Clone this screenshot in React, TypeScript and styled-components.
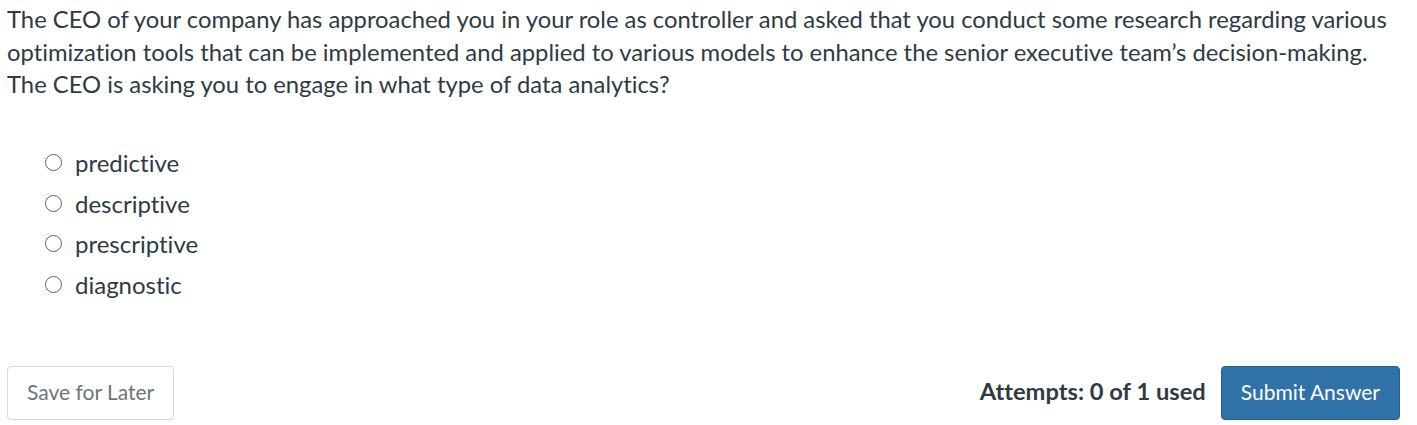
import styled, { createGlobalStyle } from 'styled-components';

const GlobalStyle = createGlobalStyle`
  html, body {
    margin: 0;
    padding: 0;
    background: #fff;
  }
  body {
    font-family: Lato, "Open Sans", sans-serif;
    color: #2d3b45;
    font-variant-ligatures: none;
  }
`;

const Page = styled.div`
  display: flex;
  flex-direction: column;
  height: 425px;
  padding: 3px 7px 0 7px;
  box-sizing: border-box;
`;

const Question = styled.p`
  margin: 0;
  font-size: 23.8px;
  line-height: 32.5px;
  width: 1395px;
`;

const OptionList = styled.div`
  display: flex;
  flex-direction: column;
  margin-top: 42px;
  padding-left: 38px;
`;

const Option = styled.label`
  display: flex;
  align-items: center;
  gap: 13px;
  height: 40.5px;
  font-size: 24px;
`;

const Radio = styled.span`
  width: 15px;
  height: 15px;
  border: 1.5px solid #5f5f5f;
  border-radius: 50%;
  flex-shrink: 0;
`;

const Footer = styled.div`
  display: flex;
  align-items: center;
  margin-top: auto;
  margin-bottom: 5px;
  width: 1393px;
`;

const Button = styled.button<{ $primary?: boolean }>`
  font-family: Lato, "Open Sans", sans-serif;
  font-variant-ligatures: none;
  font-size: 21px;
  height: 54px;
  padding: 0 19px 3px;
  border-radius: 4px;
  cursor: pointer;
  background: ${({ $primary }) => ($primary ? '#3072a7' : '#fff')};
  color: ${({ $primary }) => ($primary ? '#fff' : '#6c757c')};
  border: 1px solid ${({ $primary }) => ($primary ? '#255f8e' : '#d9d9d9')};
`;

const Attempts = styled.span`
  margin-left: auto;
  margin-right: 15px;
  padding-bottom: 4px;
  font-size: 23.7px;
  font-weight: 700;
`;

const options = ['predictive', 'descriptive', 'prescriptive', 'diagnostic'];

export default function App() {
  return (
    <>
      <GlobalStyle />
      <Page>
        <Question>
          The CEO of your company has approached you in your role as controller and asked that you
          conduct some research regarding various optimization tools that can be implemented and
          applied to various models to enhance the senior executive team’s decision-making. The CEO
          is asking you to engage in what type of data analytics?
        </Question>
        <OptionList>
          {options.map((o) => (
            <Option key={o}>
              <Radio />
              {o}
            </Option>
          ))}
        </OptionList>
        <Footer>
          <Button type="button">Save for Later</Button>
          <Attempts>Attempts: 0 of 1 used</Attempts>
          <Button type="button" $primary>
            Submit Answer
          </Button>
        </Footer>
      </Page>
    </>
  );
}
